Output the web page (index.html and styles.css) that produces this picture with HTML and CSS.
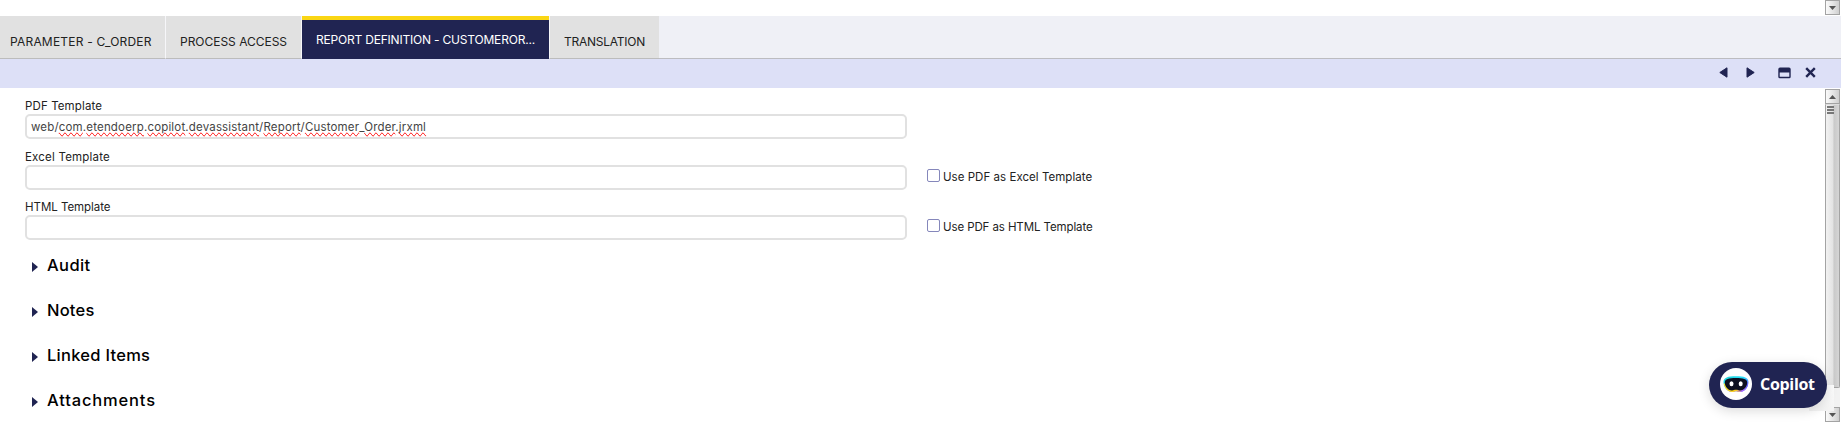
FILE: index.html
```html
<!DOCTYPE html>
<html lang="en">
<head>
<meta charset="utf-8">
<title>Report Definition</title>
<link rel="stylesheet" href="styles.css">
</head>
<body>
<div class="upper"><span class="sb-btn"><svg width="7" height="4" viewBox="0 0 7 4"><path d="M0 0h7L3.500 4z" fill="#555"/></svg></span></div>
<nav class="tabs">
  <div class="tab tab-param"><span>PARAMETER - C_ORDER</span></div>
  <div class="tab tab-access"><span>PROCESS ACCESS</span></div>
  <div class="tab tab-active"><span>REPORT DEFINITION - CUSTOMEROR...</span></div>
  <div class="tab tab-trans"><span>TRANSLATION</span></div>
</nav>
<div class="toolbar">
  <svg class="prev" width="9" height="11" viewBox="0 0 9 11"><path d="M8 .8v9.400L.8 5.500z"/></svg>
  <svg class="next" width="9" height="11" viewBox="0 0 9 11"><path d="M1 .8v9.400l7.200-4.700z"/></svg>
  <svg class="max" width="13" height="12" viewBox="0 0 13 12"><path fill-rule="evenodd" stroke="none" d="M2 .5h9a1.700 1.700 0 0 1 1.700 1.700v7.600a1.500 1.500 0 0 1-1.500 1.500H1.800A1.500 1.500 0 0 1 .3 9.800V2.200A1.700 1.700 0 0 1 2 .5zM1.700 5.400v4.400h9.600V5.400z"/></svg>
  <svg class="close" width="11" height="11" viewBox="0 0 11 11"><path d="M1.200 1.200l8.600 8.600M9.800 1.200l-8.600 8.600" stroke-width="2.400"/></svg>
</div>
<div class="content">
  <main class="form">
    <div class="row">
      <div class="field"><label class="lbl-pdf">PDF Template</label><div class="input"><span class="path">web/<u>com</u>.<u>etendoerp</u>.<u>copilot</u>.<u>devassistant</u>/<u>Report</u>/<u>Customer</u>_<u>Order</u>.<u>jrxml</u></span></div></div>
    </div>
    <div class="row">
      <div class="field"><label class="lbl-excel">Excel Template</label><div class="input"></div></div>
      <div class="check"><i class="box"></i><span class="use-excel">Use PDF as Excel Template</span></div>
    </div>
    <div class="row">
      <div class="field"><label class="lbl-html">HTML Template</label><div class="input"></div></div>
      <div class="check"><i class="box"></i><span class="use-html">Use PDF as HTML Template</span></div>
    </div>
    <div class="sections">
      <div class="section"><svg width="6" height="10" viewBox="0 0 6 10"><path d="M0 0L6 5 0 10z"/></svg><span class="s-audit">Audit</span></div>
      <div class="section"><svg width="6" height="10" viewBox="0 0 6 10"><path d="M0 0L6 5 0 10z"/></svg><span class="s-notes">Notes</span></div>
      <div class="section"><svg width="6" height="10" viewBox="0 0 6 10"><path d="M0 0L6 5 0 10z"/></svg><span class="s-linked">Linked Items</span></div>
      <div class="section"><svg width="6" height="10" viewBox="0 0 6 10"><path d="M0 0L6 5 0 10z"/></svg><span class="s-attach">Attachments</span></div>
    </div>
  </main>
  <div class="scrollbar">
    <span class="sb-btn"><svg width="7" height="4" viewBox="0 0 7 4"><path d="M0 4h7L3.500 0z" fill="#555"/></svg></span>
    <div class="thumb"><i></i><i></i><i></i></div>
    <div class="track"></div>
    <span class="sb-btn"><svg width="7" height="4" viewBox="0 0 7 4"><path d="M0 0h7L3.500 4z" fill="#555"/></svg></span>
  </div>
</div>
<div class="widget-bg"></div>
<div class="copilot">
  <svg width="32" height="32" viewBox="0 0 32 32">
    <defs><linearGradient id="g" x1="0" y1="0" x2=".75" y2="1"><stop offset="0" stop-color="#19d3d0"/><stop offset=".45" stop-color="#28dfff"/><stop offset=".8" stop-color="#6a5cff"/><stop offset="1" stop-color="#6a5cff"/></linearGradient>
    <linearGradient id="y" x1="0" y1="0" x2="1" y2="0"><stop offset="0" stop-color="#ffe21f"/><stop offset=".5" stop-color="#ffd21f"/><stop offset=".75" stop-color="#b56cff"/><stop offset="1" stop-color="#5d6bff"/></linearGradient></defs>
    <circle cx="16" cy="16" r="16" fill="#fff"/>
    <path d="M3.500 14C3.500 9.500 8 8.300 16 8.300S28.500 9.500 28.500 14 25 24 20 24c-2 0-2-.8-4-.8s-2 .8-4 .8c-5 0-8.500-5.500-8.500-10z" fill="url(#g)"/>
    <path d="M3.700 15.500c1 4.500 4 8.500 8.300 8.500 2 0 2-.8 4-.8s2 .8 4 .8c3.800 0 6.800-3.200 8-7z" fill="url(#y)"/>
    <path d="M4.800 14.500c0-3.600 4-4.600 11.200-4.600s11.200 1 11.200 4.600c0 3.500-2.700 7.900-7.200 7.900-2 0-2-.7-4-.7s-2 .7-4 .7c-4.500 0-7.200-4.400-7.200-7.900z" fill="#0d1020"/>
    <ellipse cx="11.500" cy="15.800" rx="2" ry="2.500" fill="#fff"/><ellipse cx="20.700" cy="15.800" rx="2" ry="2.500" fill="#fff"/>
  </svg>
  <span>Copilot</span>
</div>
</body>
</html>
```
FILE: styles.css
```css
* { box-sizing: border-box; }
body { margin: 0; height: 423px; overflow: hidden; background: #fff; color: #222; font-family: Inter, "Liberation Sans", sans-serif; display: flex; flex-direction: column; }
svg { display: block; flex: none; }

.upper { height: 16px; flex: none; display: flex; justify-content: flex-end; align-items: flex-end; padding: 0 1px 1px 0; }
.sb-btn { width: 15px; height: 15px; flex: none; display: flex; align-items: center; justify-content: center; border: 1px solid #a3a3a3; background: linear-gradient(90deg, #fafafa, #e2e2e2 60%, #cfcfcf); }

.tabs { height: 43px; flex: none; display: flex; background: #eff0f6; box-shadow: inset 0 -1px #bcbcc0; font-size: 12px; }
.tab { height: 43px; flex: none; background: #e1e1e1; border-right: 1px solid #f6f6f9; border-bottom: 1px solid #bcbcbc; white-space: nowrap; display: flex; align-items: center; padding: 8px 0 0 14px; font-weight: 400; }
.tab-param { width: 166px; padding-left: 10px; letter-spacing: .2px; }
.tab-access { width: 136px; letter-spacing: -.02px; }
.tab-active { width: 247px; background: #202452; color: #fff; border: 0; border-top: 4px solid #fad614; padding-top: 0; letter-spacing: -.2px; }
.tab-trans { width: 110px; border-left: 1px solid #f6f6f9; border-right: 0; letter-spacing: -.25px; }

.toolbar { height: 29px; flex: none; background: #dde0f7; display: flex; align-items: center; justify-content: flex-end; padding: 0 25px 2px 0; fill: #202452; stroke: #202452; stroke-linejoin: round; }
.next { margin-left: 18px; }
.max { margin-left: 23px; }
.close { margin-left: 14px; }

.content { height: 335px; display: flex; }
.form { flex: 1; padding: 6px 0 0 25px; }
.row { display: flex; height: 50px; font-size: 11.5px; }
.row:first-child { height: 51px; }
.field { width: 882px; }
.field label { display: block; height: 20px; line-height: 24px; }
.input { height: 25px; border: 2px solid #e1e1e1; border-radius: 5px; padding-left: 4px; line-height: 22px; color: #444; }
.path { letter-spacing: .17px; white-space: nowrap; }
.path u { text-decoration: spelling-error; }
.lbl-pdf { letter-spacing: .12px; }
.lbl-excel { letter-spacing: .2px; }
.lbl-html { letter-spacing: -.04px; }
.check { display: flex; align-items: flex-start; padding: 24px 0 0 20px; gap: 3px; }
.box { width: 13px; height: 13px; border: 1px solid #8587bb; border-radius: 2px; }
.check span { line-height: 16px; }
.use-excel { letter-spacing: .04px; }
.use-html { letter-spacing: -.1px; }

.sections { padding: 2px 0 0 7px; color: #000; font-size: 16.5px; font-weight: 450; }
.section { display: flex; align-items: center; height: 45px; line-height: 24px; gap: 9px; padding-bottom: 9px; }
.section svg { fill: #202452; margin-top: 3px; }
.s-audit { letter-spacing: .4px; }
.s-notes { letter-spacing: .2px; }
.s-linked { letter-spacing: .27px; }
.s-attach { letter-spacing: .84px; }

.scrollbar { width: 16px; padding: 1px 1px 1px 0; display: flex; flex-direction: column; }
.thumb { height: 284px; flex: none; border: 1px solid #a3a3a3; border-top-color: #ddd; border-radius: 0 0 2px 2px; background: linear-gradient(90deg, #f2f2f2, #e2e2e2 55%, #c9c9c9 60%, #d5d5d5); padding: 1px 0 0 1px; }
.thumb i { display: block; width: 7px; height: 2px; background: #777; margin-bottom: 1px; }
.track { flex: 1; background: #f2f2f2; }

/* Floating launcher over the form and its scrollbar */
.widget-bg { position: absolute; left: 1809px; top: 385px; width: 25px; height: 26px; background: linear-gradient(#fdfdfd, #f3f3f3); }
.copilot { position: absolute; left: 1709px; top: 362px; width: 118px; height: 46px; border-radius: 23px; background: #202452; color: #fff; box-shadow: 0 3px 12px rgba(0, 0, 0, .14); display: flex; align-items: center; padding: 0 0 2px 11px; gap: 8px; font: 700 16px/20px "Open Sans", sans-serif; letter-spacing: -.3px; }
```
